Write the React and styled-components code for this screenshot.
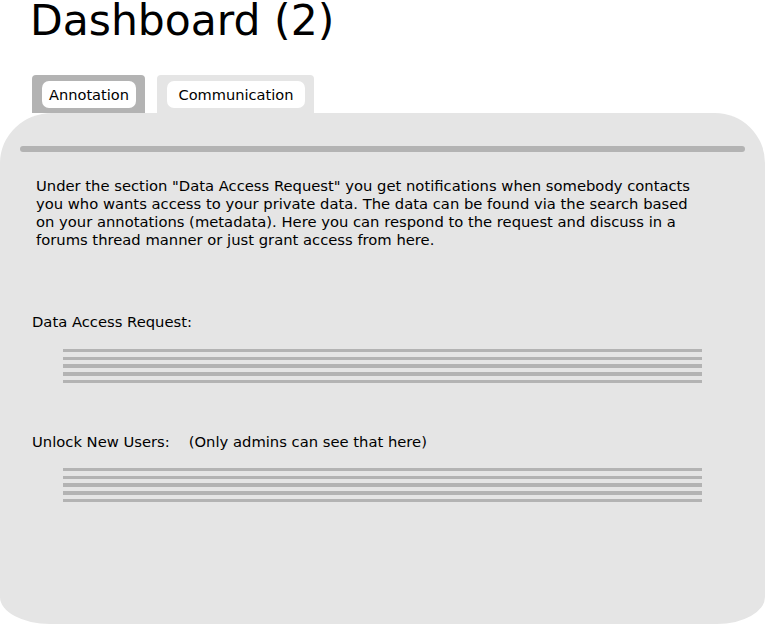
import styled, { createGlobalStyle } from "styled-components"

const GlobalStyle = createGlobalStyle`
    html, body {
        margin: 0;
        padding: 0;
        background: #ffffff;
        overflow: hidden;
    }
    body {
        font-family: "DejaVu Sans", "Liberation Sans", sans-serif;
        color: #000000;
    }
`

const Page = styled.div`
    width: 765px;
    height: 624px;
    display: flex;
    flex-direction: column;
`

const Title = styled.h1`
    margin: -1.2px 0 0 30px;
    font-size: 42.5px;
    font-weight: normal;
    line-height: 43px;
    white-space: nowrap;
`

const Tabs = styled.div`
    display: flex;
    gap: 12px;
    margin: 33.2px 0 0 32px;
`

const Tab = styled.div`
    height: 38px;
    padding: 6px 9px 0 10px;
    box-sizing: border-box;
    border-radius: 4px 4px 0 0;
    background: ${(p) => (p.active ? "#b3b3b3" : "#e5e5e5")};
`

const TabLabel = styled.div`
    width: ${(p) => p.width}px;
    height: 27px;
    border-radius: 7px;
    background: #ffffff;
    display: flex;
    align-items: center;
    justify-content: center;
    font-size: 14.6px;
`

const Panel = styled.div`
    flex: 1;
    background: #e5e5e5;
    border-radius: 52px 50px 48px 50px / 50px 50px 27px 27px;
    padding: 33px 20px 0 20px;
    display: flex;
    flex-direction: column;
`

const Separator = styled.div`
    height: 6px;
    border-radius: 3px;
    background: #b3b3b3;
`

const Intro = styled.p`
    margin: 24.7px 0 0 16px;
    font-size: 14.75px;
    line-height: 18px;
    white-space: nowrap;
`

const Label = styled.div`
    margin: ${(p) => p.top}px 0 0 12px;
    font-size: 14.75px;
    line-height: 18px;
    white-space: nowrap;
`

const Note = styled.span`
    margin-left: 19px;
`

const LineList = styled.div`
    margin: ${(p) => p.top}px 0 0 43px;
    width: 639px;
    display: flex;
    flex-direction: column;
    gap: 4.25px;
`

const Line = styled.div`
    height: 3.5px;
    background: #b3b3b3;
`

const Placeholder = ({ top }) => (
    <LineList top={top}>
        {[0, 1, 2, 3, 4].map((i) => (
            <Line key={i} />
        ))}
    </LineList>
)

const App = () => {
    return (
        <Page>
            <GlobalStyle />
            <Title>Dashboard (2)</Title>
            <Tabs>
                <Tab active>
                    <TabLabel width={94}>Annotation</TabLabel>
                </Tab>
                <Tab>
                    <TabLabel width={138}>Communication</TabLabel>
                </Tab>
            </Tabs>
            <Panel>
                <Separator />
                <Intro>
                    Under the section "Data Access Request" you get notifications when somebody contacts<br />
                    you who wants access to your private data. The data can be found via the search based<br />
                    on your annotations (metadata). Here you can respond to the request and discuss in a<br />
                    forums thread manner or just grant access from here.
                </Intro>
                <Label top={64.8}>Data Access Request:</Label>
                <Placeholder top={17.5} />
                <Label top={49.5}>
                    Unlock New Users:<Note>(Only admins can see that here)</Note>
                </Label>
                <Placeholder top={17} />
            </Panel>
        </Page>
    )
}

export default App
